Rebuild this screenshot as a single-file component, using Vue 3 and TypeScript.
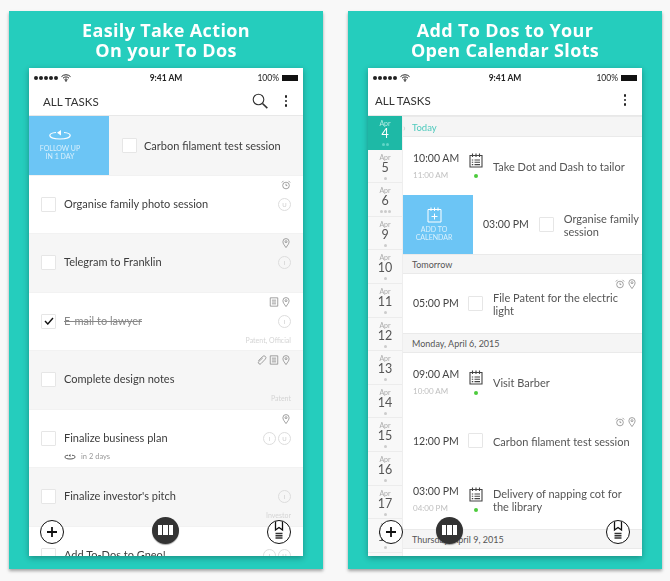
<template>
  <svg class="defs" width="0" height="0" aria-hidden="true">
    <symbol id="i-alarm" viewBox="0 0 12 12">
      <circle cx="6" cy="6.600" r="4" fill="none" stroke="currentColor" />
      <path d="M1 3 3 1M11 3 9 1M6 4.500v2.200h1.600" fill="none" stroke="currentColor" />
    </symbol>
    <symbol id="i-pin" viewBox="0 0 12 12">
      <path d="M6 11.500C4 8.600 2.300 6.800 2.300 4.400a3.700 3.700 0 0 1 7.400 0C9.700 6.800 8 8.600 6 11.500Z" fill="none" stroke="currentColor" />
      <circle cx="6" cy="4.400" r="1.200" fill="none" stroke="currentColor" />
    </symbol>
    <symbol id="i-note" viewBox="0 0 12 12">
      <path d="M1.500 1h9v10h-9ZM3.500 3.800h5M3.500 6h5M3.500 8.200h5" fill="none" stroke="currentColor" />
    </symbol>
    <symbol id="i-clip" viewBox="0 0 12 12">
      <path d="M1.500 7 6.800 1.800a2.200 2.200 0 0 1 3.300 3L5 10.200a1.800 1.800 0 0 1-3-2.200L7 3.400" fill="none" stroke="currentColor" />
    </symbol>
    <symbol id="i-cal" viewBox="0 0 14 15">
      <path d="M1 2.500h12v11.500H1ZM3.500 .5v3.500M7 .5v3.500M10.500 .5v3.500M5.500 7h5.500M5.500 9.300h5.500M5.500 11.600h5.500M2.800 7h1.400M2.800 9.300h1.400M2.800 11.600h1.400" fill="none" stroke="currentColor" stroke-width="1.100" />
    </symbol>
  </svg>

  <main class="page">
    <section v-for="panel in panels" :key="panel.kind" class="panel">
      <h1 class="panel-title">{{ panel.title[0] }}<br />{{ panel.title[1] }}</h1>

      <div class="phone" :class="panel.kind">
        <div class="status">
          <span class="signal">
            <i v-for="n in 5" :key="n"></i>
            <svg width="10" height="8" viewBox="0 0 10 8">
              <path d="M.5 2.600a6.400 6.400 0 0 1 9 0M2 4.200a4.200 4.200 0 0 1 6 0M3.500 5.700a2 2 0 0 1 3 0" fill="none" stroke="#222" />
              <path d="M5 8 3.900 6.700a1.500 1.500 0 0 1 2.200 0Z" fill="#222" />
            </svg>
          </span>
          <span class="clock">9:41 AM</span>
          <span class="battery">100% <b></b></span>
        </div>

        <header class="bar">
          <span class="bar-title">ALL TASKS</span>
          <svg v-if="panel.kind === 'list'" class="search" width="16" height="16" viewBox="0 0 16 16">
            <circle cx="6.500" cy="6.500" r="5.300" fill="none" stroke="#333" stroke-width="1.100" />
            <path d="m10.500 10.500 4.800 4.600" stroke="#333" stroke-width="1.600" />
          </svg>
          <span class="more"><i></i><i></i><i></i></span>
        </header>

        <div v-if="panel.kind === 'list'" class="tasks">
          <div class="swipe-row">
            <div class="action follow">
              <svg width="22" height="10" viewBox="0 0 22 10">
                <path d="M7 2.500C3 2.800 .8 4 .8 5.500c0 2 4.500 3.500 10.200 3.500s10.200-1.500 10.200-3.500c0-1.500-2.200-2.700-6.200-3" fill="none" stroke="#fff" stroke-width="1.200" />
                <path d="M12 0v5.500L8 2.700Z" fill="#fff" />
              </svg>
              <span>FOLLOW UP<br />IN 1 DAY</span>
            </div>
            <span class="check"></span>
            <span class="task-text">Carbon filament test session</span>
          </div>

          <div v-for="task in tasks" :key="task.text" class="task" :class="{ shaded: task.shaded }">
            <div class="meta">
              <svg v-for="icon in task.icons" :key="icon" class="meta-icon" viewBox="0 0 12 12"><use :href="'#i-' + icon" /></svg>
            </div>
            <span class="check" :class="{ done: task.done }">
              <svg v-if="task.done" width="10" height="8" viewBox="0 0 10 8"><path d="m1 4 2.800 3L9 1" fill="none" stroke="#111" stroke-width="1.400" /></svg>
            </span>
            <span class="task-text" :class="{ struck: task.done }">{{ task.text }}</span>
            <span class="flags">
              <i v-for="flag in task.flags" :key="flag">{{ flag }}</i>
            </span>
            <div class="foot">
              <span class="repeat">
                <template v-if="task.repeat">
                  <svg width="12" height="6" viewBox="0 0 22 12"><path d="M7 2.500C3 2.800 .8 4 .8 6c0 2.500 4.500 4 10.200 4s10.200-1.500 10.200-4c0-2-2.200-3.200-6.200-3.500" fill="none" stroke="#555" stroke-width="2" /><path d="M12 0v6L8 3Z" fill="#555" /></svg>
                  {{ task.repeat }}
                </template>
              </span>
              <span class="tag">{{ task.tag }}</span>
            </div>
          </div>
        </div>

        <div v-else class="agenda">
          <nav class="days">
            <div v-for="day in days" :key="day.num" class="day" :class="{ today: day.num === 4 }">
              <small>Apr</small>
              <strong>{{ day.num }}</strong>
              <span class="dots"><i v-for="n in day.dots" :key="n"></i></span>
            </div>
          </nav>

          <div class="slots">
            <template v-for="item in agenda" :key="item.id">
              <h2 v-if="item.heading" class="day-head" :class="{ now: item.now }">
                <span v-if="item.now" class="chev">›</span>{{ item.heading }}
              </h2>
              <div v-else-if="item.swipe" class="swipe-slot">
                <div class="action add">
                  <svg width="15" height="16" viewBox="0 0 15 16">
                    <path d="M1 2.500h13V15H1ZM4 .5v3.500M7.500 .5v3.500M11 .5v3.500M7.500 6.500v6M4.500 9.500h6" fill="none" stroke="#fff" />
                  </svg>
                  <span>ADD TO<br />CALENDAR</span>
                </div>
                <span class="time">{{ item.time }}</span>
                <span class="check"></span>
                <span class="slot-text">{{ item.text }}</span>
              </div>
              <div v-else class="slot">
                <div class="slot-meta">
                  <svg v-for="icon in item.icons" :key="icon" class="meta-icon" viewBox="0 0 12 12"><use :href="'#i-' + icon" /></svg>
                </div>
                <div class="times">
                  <span class="time">{{ item.time }}</span>
                  <span v-if="item.end" class="end">{{ item.end }}</span>
                </div>
                <span v-if="item.end" class="cal">
                  <svg width="14" height="15" viewBox="0 0 14 15"><use href="#i-cal" /></svg>
                  <i></i>
                </span>
                <span v-else class="check"></span>
                <span class="slot-text">{{ item.text }}</span>
              </div>
            </template>
          </div>
        </div>

        <div class="fabs">
          <button class="fab">
            <svg width="12" height="12" viewBox="0 0 12 12"><path d="M6 1v10M1 6h10" stroke="#111" stroke-width="1.800" /></svg>
          </button>
          <button class="fab-mid">
            <i></i><i></i><i></i>
          </button>
          <button class="fab fab-book">
            <svg width="20" height="21" viewBox="0 0 20 21">
              <path d="M6.500 0v9l3.500-2.500L13.500 9V0" fill="none" stroke="#111" stroke-width="1.300" />
              <path d="M6.500 12.500h7M6.500 14.700h7M6.500 16.900h7" stroke="#333" stroke-width="1.500" />
            </svg>
          </button>
        </div>
      </div>
    </section>
  </main>
</template>

<script setup lang="ts">
interface Task {
  text: string
  shaded?: boolean
  done?: boolean
  icons?: string[]
  flags?: string[]
  tag?: string
  repeat?: string
}

interface AgendaItem {
  id: string
  heading?: string
  now?: boolean
  swipe?: boolean
  time?: string
  end?: string
  text?: string
  icons?: string[]
}

const panels = [
  { kind: 'list', title: ['Easily Take Action', 'On your To Dos'] },
  { kind: 'calendar', title: ['Add To Dos to Your', 'Open Calendar Slots'] }
]

const tasks: Task[] = [
  { text: 'Organise family photo session', icons: ['alarm'], flags: ['U'] },
  { text: 'Telegram to Franklin', shaded: true, icons: ['pin'], flags: ['I'] },
  { text: 'E-mail to lawyer', done: true, icons: ['note', 'pin'], flags: ['I'], tag: 'Patent, Official' },
  { text: 'Complete design notes', shaded: true, icons: ['clip', 'note', 'pin'], tag: 'Patent' },
  { text: 'Finalize business plan', icons: ['pin'], flags: ['I', 'U'], repeat: 'in 2 days' },
  { text: "Finalize investor's pitch", shaded: true, flags: ['I'], tag: 'Investor' },
  { text: 'Add To-Dos to Gneo!', flags: ['I', 'U'] }
]

const days = [
  { num: 4, dots: 2 },
  { num: 5, dots: 1 },
  { num: 6, dots: 3 },
  { num: 9, dots: 1 },
  { num: 10, dots: 1 },
  { num: 11, dots: 1 },
  { num: 12, dots: 1 },
  { num: 13, dots: 1 },
  { num: 14, dots: 1 },
  { num: 15, dots: 1 },
  { num: 16, dots: 1 },
  { num: 17, dots: 1 },
  { num: 18, dots: 1 }
]

const agenda: AgendaItem[] = [
  { id: 'h1', heading: 'Today', now: true },
  { id: 's1', time: '10:00 AM', end: '11:00 AM', text: 'Take Dot and Dash to tailor' },
  { id: 's2', swipe: true, time: '03:00 PM', text: 'Organise family session' },
  { id: 'h2', heading: 'Tomorrow' },
  { id: 's3', time: '05:00 PM', text: 'File Patent for the electric light', icons: ['alarm', 'pin'] },
  { id: 'h3', heading: 'Monday, April 6, 2015' },
  { id: 's4', time: '09:00 AM', end: '10:00 AM', text: 'Visit Barber' },
  { id: 's5', time: '12:00 PM', text: 'Carbon filament test session', icons: ['alarm', 'pin'] },
  { id: 's6', time: '03:00 PM', end: '04:00 PM', text: 'Delivery of napping cot for the library' },
  { id: 'h4', heading: 'Thursday, April 9, 2015' }
]
</script>

<style>
html,
body {
  margin: 0;
  background: #f8f8f8;
}
</style>

<style scoped>
.defs {
  position: absolute;
}

.page {
  display: flex;
  gap: 25px;
  width: 670px;
  height: 581px;
  box-sizing: border-box;
  padding: 11px 0 0 9px;
  overflow: hidden;
  font-family: Lato, "Open Sans", sans-serif;
  color: #444;
  filter: blur(0.3px);
}

.panel {
  width: 314px;
  height: 558px;
  padding: 0 20px;
  box-sizing: border-box;
  background: #25cdbd;
  box-shadow: 0 2px 3px rgba(0, 0, 0, 0.35);
}

.panel-title {
  height: 57px;
  margin: 0;
  padding-top: 10px;
  box-sizing: border-box;
  font-family: "Open Sans", sans-serif;
  font-size: 18px;
  line-height: 19.5px;
  font-weight: 700;
  letter-spacing: 0.35px;
  text-align: center;
  color: #fff;
}

.phone {
  position: relative;
  display: flex;
  flex-direction: column;
  height: 488px;
  overflow: hidden;
  background: #fff;
  box-shadow: 0 2px 6px rgba(0, 0, 0, 0.3);
}

.status {
  flex: none;
  position: relative;
  display: flex;
  justify-content: space-between;
  align-items: center;
  height: 19px;
  padding: 0 5px 0 5px;
  font-size: 8.500px;
  font-weight: 700;
  color: #222;
}

.signal {
  display: flex;
  align-items: center;
  gap: 1px;
}

.signal i {
  width: 4px;
  height: 4px;
  border-radius: 50%;
  background: #222;
}

.signal svg {
  margin-left: 2px;
}

.clock {
  position: absolute;
  left: 0;
  right: 0;
  text-align: center;
}

.battery {
  display: flex;
  align-items: center;
  gap: 3px;
  font-weight: 400;
}

.battery b {
  width: 15px;
  height: 6px;
  background: #111;
  border-right: 1px solid #111;
}

.bar {
  flex: none;
  display: flex;
  align-items: center;
  height: 29px;
  padding: 0 14px;
  border-bottom: 1px solid #e8e8e8;
  box-sizing: border-box;
}

.calendar .bar {
  padding-left: 7px;
  padding-right: 14px;
  padding-bottom: 2px;
}

.bar-title {
  margin-right: auto;
  font-size: 11.500px;
  color: #333;
}

.search {
  margin-right: 15px;
}

.more {
  display: flex;
  flex-direction: column;
  gap: 2px;
  padding: 0 2px;
}

.more i {
  width: 2.500px;
  height: 2.500px;
  border-radius: 50%;
  background: #222;
}

.swipe-row {
  display: flex;
  align-items: center;
  height: 58.500px;
  background: #f6f6f6;
}

.action {
  flex: none;
  display: flex;
  flex-direction: column;
  align-items: center;
  justify-content: center;
  gap: 4px;
  align-self: stretch;
  background: #6cc5f5;
  font-size: 7px;
  line-height: 7.500px;
  text-align: center;
  color: #d9f0fc;
}

.action.follow {
  width: 80px;
  margin-right: 13px;
  padding: 0 18px 0 0;
  gap: 5px;
  box-sizing: border-box;
}

.action.add {
  width: 70px;
  margin-right: 10px;
  padding-right: 8px;
  gap: 3px;
  box-sizing: border-box;
}

.check {
  flex: none;
  display: flex;
  align-items: center;
  justify-content: center;
  width: 13px;
  height: 13px;
  background: #fff;
  border: 1px solid #e6e6e6;
  border-radius: 1px;
}

.swipe-row .check {
  margin-right: 7px;
}

.task-text {
  font-size: 11px;
  white-space: nowrap;
  color: #3c3c3c;
}

.task .task-text {
  padding-bottom: 2px;
}

.task-text.struck {
  text-decoration: line-through;
  color: #888;
}

.task {
  display: grid;
  grid-template-columns: 15px 1fr auto;
  grid-template-rows: 18.500px 20.500px 19.500px;
  column-gap: 8px;
  align-items: center;
  padding: 0 12px;
  height: 58.500px;
  box-sizing: border-box;
  border-top: 1px solid #f2f2f2;
}

.task.shaded {
  background: #f6f6f6;
}

.meta {
  grid-column: 1 / -1;
  display: flex;
  justify-content: flex-end;
  gap: 2px;
}

.meta-icon {
  width: 10px;
  height: 10px;
  stroke-width: 1;
  color: #8f8f8f;
}

.flags {
  display: flex;
  gap: 2px;
}

.flags i {
  display: flex;
  align-items: center;
  justify-content: center;
  width: 11px;
  height: 11px;
  border: 1px solid #ddd;
  border-radius: 50%;
  font-size: 6px;
  font-style: normal;
  color: #ccc;
}

.foot {
  grid-column: 1 / -1;
  align-self: start;
  height: 16px;
  display: flex;
  justify-content: space-between;
  align-items: center;
}

.repeat {
  display: flex;
  align-items: center;
  gap: 5px;
  margin-left: 23px;
  font-size: 7.500px;
  color: #999;
}

.tag {
  font-size: 7px;
  color: #d4d4d4;
}

.agenda {
  flex: 1;
  display: flex;
  min-height: 0;
}

.days {
  flex: none;
  width: 35px;
  background: #f8f8f8;
  border-right: 1px solid #eee;
  box-sizing: border-box;
}

.day {
  display: flex;
  flex-direction: column;
  align-items: center;
  height: 33.600px;
  padding-top: 3px;
  box-sizing: border-box;
  border-bottom: 1px solid #ececec;
  color: #555;
}

.day small {
  font-size: 7px;
  line-height: 8px;
  color: #aaa;
}

.day strong {
  font-size: 12.500px;
  line-height: 14px;
  font-weight: 400;
}

.dots {
  display: flex;
  gap: 1px;
  margin-top: 2px;
}

.dots i {
  width: 3px;
  height: 3px;
  border-radius: 50%;
  background: #ccc;
}

.day.today {
  background: #1eb9a6;
  border-color: #1eb9a6;
  color: #fff;
}

.day.today small {
  color: #b5ece4;
}

.day.today .dots i {
  background: #5fd5c6;
}

.slots {
  flex: 1;
  min-width: 0;
}

.day-head {
  position: relative;
  display: flex;
  align-items: center;
  height: 20.500px;
  margin: 0;
  padding: 2px 0 0 9px;
  background: #f5f5f5;
  border-top: 1px solid #eaeaea;
  border-bottom: 1px solid #eaeaea;
  box-sizing: border-box;
  font-size: 9px;
  font-weight: 400;
  color: #555;
}

.day-head.now {
  font-size: 9.500px;
  color: #4fcabd;
}

.chev {
  position: absolute;
  left: 0;
  color: #ccc;
}

.swipe-slot,
.slot {
  display: flex;
  align-items: center;
  height: 58.500px;
  box-sizing: border-box;
}

.slot {
  position: relative;
  padding-left: 10px;
}

.slot-meta {
  position: absolute;
  top: 5px;
  right: 5px;
  display: flex;
  gap: 2px;
}

.times {
  flex: none;
  display: flex;
  flex-direction: column;
  gap: 7px;
  width: 56px;
}

.time {
  flex: none;
  font-size: 10.500px;
  line-height: 12px;
  white-space: nowrap;
  color: #444;
}

.end {
  font-size: 8px;
  line-height: 9px;
  color: #c0c0c0;
}

.check + .slot-text,
.cal + .slot-text {
  margin-left: 10px;
}

.slot .check {
  margin-left: -1px;
}

.swipe-slot .check {
  margin-left: 10px;
}

.cal {
  flex: none;
  display: flex;
  flex-direction: column;
  align-items: center;
  gap: 6px;
  width: 14px;
  color: #444;
}

.cal i {
  width: 4px;
  height: 4px;
  border-radius: 50%;
  background: #4ccb3c;
}

.slot-text {
  max-width: 140px;
  padding-top: 1px;
  font-size: 11px;
  line-height: 13px;
  color: #555;
}

.fabs {
  position: absolute;
  left: 11px;
  right: 12px;
  bottom: 12px;
  display: flex;
  align-items: center;
}

.fab {
  display: flex;
  align-items: center;
  justify-content: center;
  width: 24px;
  height: 24px;
  padding: 0;
  background: #fff;
  border: 1.500px solid #111;
  border-radius: 50%;
  overflow: hidden;
}

.fab-book {
  margin-left: auto;
  align-items: flex-start;
}

.fab-mid {
  display: flex;
  align-items: center;
  justify-content: center;
  gap: 1px;
  width: 27px;
  height: 27px;
  padding: 0;
  margin-top: -4px;
  background: #333;
  border: 0;
  border-radius: 50%;
  box-shadow: 0 1px 1px rgba(0, 0, 0, 0.35);
}

.list .fab-mid {
  margin-left: 88px;
}

.calendar .fab-mid {
  margin-left: 33px;
}

.fab-mid i {
  width: 4.500px;
  height: 10px;
  background: #fff;
}
</style>
